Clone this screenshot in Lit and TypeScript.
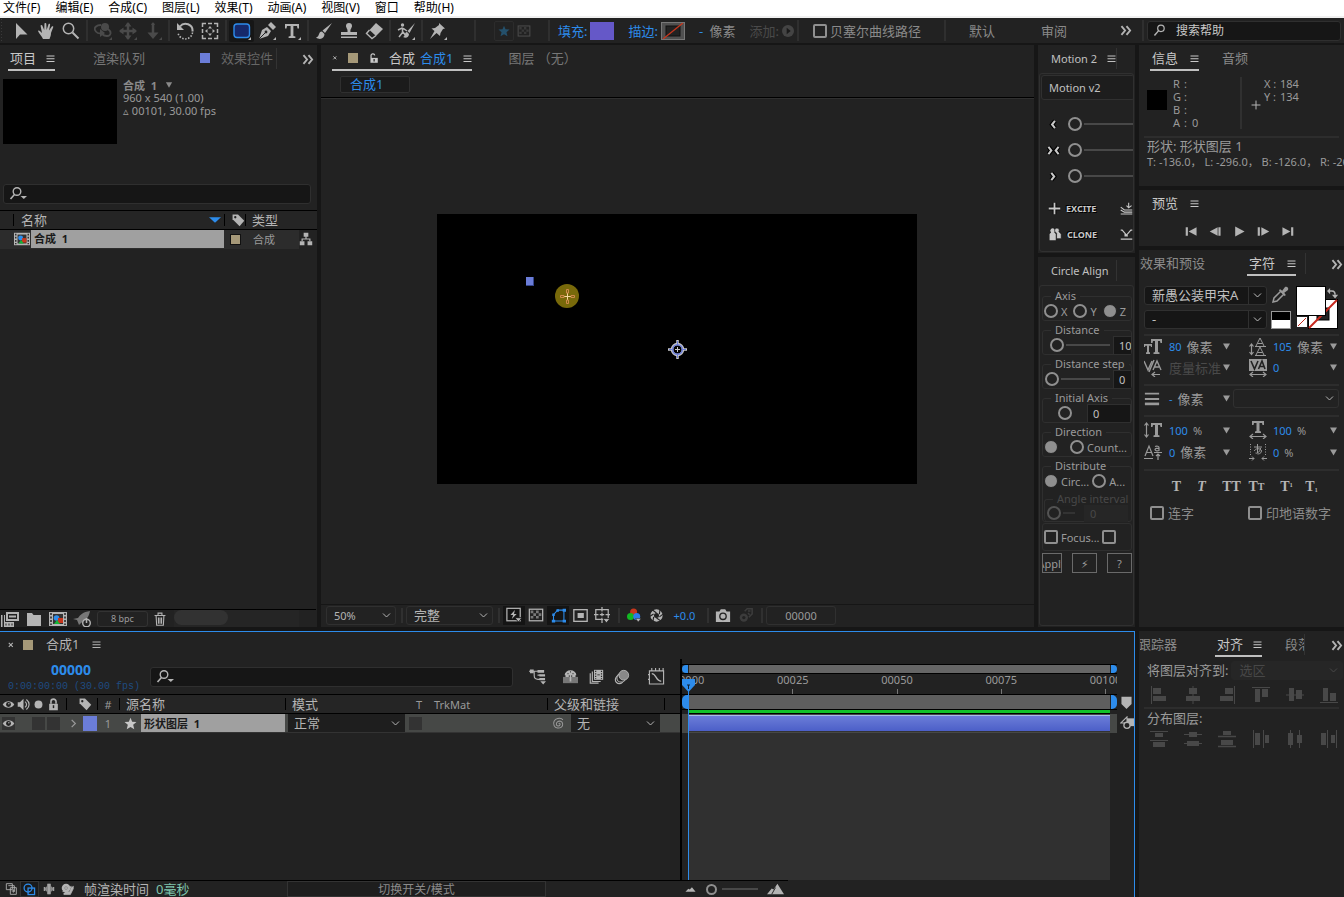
import { LitElement, html, svg, css, nothing, TemplateResult, SVGTemplateResult } from "lit";
import { customElement } from "lit/decorators.js";

type Glyph = SVGTemplateResult;

/* Every glyph is drawn on an 18 x 18 grid with currentColor. */
const corner = svg`<path d="M18 15v3h-3z" fill="currentColor"/>`;
const icons: Record<string, Glyph> = {
  select: svg`<path d="M4 1v16l4-4.500h7.500z" fill="currentColor"/>`,
  hand: svg`<path d="M6 17c-1-3-4-5-5-8 1-1 2 0 4 2L3.500 3.500c1-1 1.800-.5 2 .5L7.200 8 7.500 1.500c.8-.9 1.700-.5 1.800.3L9.600 8l2-6c1-.6 1.700 0 1.500.9L12 8.600l3-4.300c1-.4 1.500.2 1.200 1L14 11c0 3-1 4-1.500 6z" fill="currentColor"/>`,
  zoom: svg`<circle cx="6.500" cy="6.500" r="5.200" fill="none" stroke="currentColor" stroke-width="1.500"/><path d="M10.500 10.500l6 6" stroke="currentColor" stroke-width="2"/>`,
  orbit: svg`<circle cx="11" cy="5" r="4" fill="currentColor"/><path d="M7 3C2 3 0 6 1 8c1 3 4 4 7 3M14 7c4 3 3 7-1 7-2 0-4-1-5-2" fill="none" stroke="currentColor" stroke-width="1.800"/><path d="M6 7v8l5-4z" fill="currentColor"/>${corner}`,
  pan: svg`<path d="M9 1v16M1 9h16" stroke="currentColor" stroke-width="2.400"/><path d="M9 0l3.500 4.500h-7zM9 18l3.500-4.500h-7zM0 9l4.500-3.500v7zM18 9l-4.500-3.500v7z" fill="currentColor"/>${corner}`,
  dolly: svg`<path d="M9 1v12" stroke="currentColor" stroke-width="2.500"/><path d="M7 3l2-3 2 3zM3.500 10.500h11L9 17z" fill="currentColor"/>${corner}`,
  rotate: svg`<path d="M4 4.500a7 7 0 0 1 12.500 5" fill="none" stroke="currentColor" stroke-width="2"/><path d="M16.500 10.500a7.300 7.300 0 0 1-14.500 0" fill="none" stroke="currentColor" stroke-width="1.600" stroke-dasharray="1.500 1.500"/><path d="M1 1v7h7z" fill="currentColor"/>`,
  anchor: svg`<path d="M1.500 5V1.500H5M7 1.500h4M13 1.500h3.500V5M16.500 7v4M16.500 13v3.500H13M11 16.500H7M5 16.500H1.500V13M1.500 11V7" fill="none" stroke="currentColor" stroke-width="1.500"/><path d="M9 4l2 2.500H7zM9 14l2-2.500H7zM4 9l2.500-2v4zM14 9l-2.500-2v4z" fill="currentColor"/>`,
  roundrect: svg`<rect x="1" y="2" width="15.500" height="13.500" rx="3" fill="#16296b" stroke="#2d8ceb" stroke-width="1.400"/>${corner}`,
  pen: svg`<path d="M1 17l3-9 5-3 4 4-3 5z" fill="currentColor"/><path d="M10 3l3-3 5 5-3 3z" fill="currentColor"/><path d="M1 17l6-6" stroke="#222"/><circle cx="8" cy="10" r="1.400" fill="#222"/>${corner}`,
  type: svg`<path d="M2 2h14v4.500h-1.500L14 4h-3.600v10l2 .6V16H5.600v-1.400l2-.6V4H4l-.5 2.500H2z" fill="currentColor"/>${corner}`,
  brush: svg`<path d="M17 1L7.500 8.500l2.500 2.500zM7 9.500c-4 0-2 5-6 6 4 3 8.500 1 8.500-3.500z" fill="currentColor"/>`,
  stamp: svg`<path d="M7.500 10C8 7 6 6 6 4a3 3 0 0 1 6 0c0 2-2 3-1.500 6H17v3H1v-3zM1 14.500h16V16H1z" fill="currentColor"/>`,
  eraser: svg`<path d="M11 1l7 6-7 7-6.500-6z" fill="currentColor"/><path d="M4.500 8L1.500 11.500 7 16.500l4-3" fill="none" stroke="currentColor" stroke-width="1.400"/>`,
  roto: svg`<circle cx="5.500" cy="3" r="1.700" fill="currentColor"/><path d="M1 8l4-2 2 1 3 2M5.500 6v4.500L2 15M6 10l3 4" fill="none" stroke="currentColor" stroke-width="1.500"/><path d="M18 1l-7.500 8 2 2zM10 10c-3 0-1 4-4 5 3 2 6 0 6-3z" fill="currentColor"/>${corner}`,
  pin: svg`<path d="M10 1l6 5.500-2 .5-2.500 4-.5 3-3.500-3L1 17l4.500-8L2.500 6.500 6 6l4-3z" fill="currentColor"/>${corner}`,
  star: svg`<path d="M9 1l2.300 5.500 6 .4-4.600 3.900L14.200 17 9 13.700 3.800 17l1.500-6.200L.7 6.900l6-.4z" fill="currentColor"/>`,
  menu: svg`<path d="M1 4h16M1 9.500h16M1 15h16" stroke="currentColor" stroke-width="2"/>`,
  more: svg`<path d="M2 3l5 6-5 6M9 3l5 6-5 6" fill="none" stroke="currentColor" stroke-width="2.600"/>`,
  close: svg`<path d="M4 4l9 9M13 4l-9 9" stroke="currentColor" stroke-width="2.500"/>`,
  unlock: svg`<rect x="4" y="8" width="12" height="8" fill="currentColor"/><path d="M5 8V5a3 3 0 0 1 6-1" fill="none" stroke="currentColor" stroke-width="2"/><path d="M10 10v4" stroke="#222" stroke-width="2"/>`,
  lock: svg`<rect x="3" y="8" width="12" height="9" fill="currentColor"/><path d="M5.500 8V5a3.500 3.500 0 0 1 7 0v3" fill="none" stroke="currentColor" stroke-width="2.200"/><path d="M9 10v4" stroke="#222" stroke-width="2"/>`,
  lens: svg`<circle cx="11" cy="6" r="4.500" fill="none" stroke="currentColor" stroke-width="1.700"/><path d="M7.500 9.500L2 16" stroke="currentColor" stroke-width="2"/>`,
  lensDrop: svg`<circle cx="8" cy="6.500" r="3.800" fill="none" stroke="currentColor" stroke-width="1.400"/><path d="M5.500 9.500L1.500 14" stroke="currentColor" stroke-width="1.600"/><path d="M11.500 11h6.500l-3.200 3z" fill="currentColor"/>`,
  down: svg`<path d="M2 3h14L9 15z" fill="currentColor"/>`,
  sort: svg`<path d="M0 5h18L9 13z" fill="#2d8ceb"/>`,
  chevron: svg`<path d="M2 5l7 7 7-7" fill="none" stroke="currentColor" stroke-width="2"/>`,
  twirl: svg`<path d="M6 3l6 6-6 6" fill="none" stroke="currentColor" stroke-width="2"/>`,
  tag: svg`<path d="M2 2h7l8 8-6 7-9-9z" fill="currentColor"/><circle cx="5.500" cy="5.500" r="1.500" fill="#222"/>`,
  comp: svg`<rect x="0" y="2" width="18" height="14" fill="#b4b4b4"/><path d="M2 3v12M16 3v12" stroke="#222" stroke-width="1.500" stroke-dasharray="2 1.500"/><rect x="4" y="4" width="10" height="10" fill="#333"/><circle cx="7.500" cy="8" r="2.800" fill="#2d8ceb"/><rect x="9" y="8" width="5" height="5" fill="#c8371d"/><path d="M5 14l3-4 3 4z" fill="#17b536"/>`,
  tree: svg`<path d="M6 1h6v5H6zM1 12h6v5H1zM11 12h6v5h-6z" fill="currentColor"/><path d="M9 5v4M4 12V9h10v3" fill="none" stroke="currentColor" stroke-width="1.500"/>`,
  footage: svg`<path d="M6 3h11v7H6z" fill="none" stroke="currentColor" stroke-width="2"/><path d="M8 5.500h7v2H8zM0 5h1.500v12H0zM3 12h10v5H3zM3 5h1v12H3z" fill="currentColor"/><path d="M5 13.500v2M8 13.500v2M11 13.500v2" stroke="#222"/>`,
  folder: svg`<path d="M2 3h5l1.500 2H16v11H2z" fill="currentColor"/>`,
  rocket: svg`<path d="M17 1C10 2 7 5 5 8L0 9l4 1 2 5 2-2c5-3 8-6 9-12z" fill="#777"/><circle cx="13.500" cy="13" r="3.800" fill="#222" stroke="currentColor" stroke-width="1.400"/><path d="M13.500 8v5" stroke="currentColor" stroke-width="1.500"/>`,
  trash: svg`<path d="M2 4.500h14M6.500 4V1.500h5V4M4 5l.7 12h8.600L14 5M7 7v8M9 7v8M11 7v8" fill="none" stroke="currentColor" stroke-width="1.400"/>`,
  fast: svg`<rect x="1" y="1.500" width="15" height="14" fill="none" stroke="currentColor" stroke-width="1.400"/><path d="M10 3.500L5 9h3l-1.500 4.500L12 8H9z" fill="currentColor"/><path d="M10 12h8l-4 5z" fill="currentColor" stroke="#161616"/>`,
  checker: svg`<rect x="1.500" y="2.500" width="15" height="13" fill="none" stroke="currentColor" stroke-width="1.400"/><path d="M3 4h3v3H3zM9 4h3v3H9zM6 7h3v3H6zM12 7h3v3h-3zM3 10h3v3H3zM9 10h3v3H9z" fill="currentColor" opacity=".6"/>`,
  mask: svg`<path d="M3 15.500V8l5-5.500h7.500v13z" fill="none" stroke="#2d8ceb" stroke-width="1.300"/><path d="M1 14h4v3.500H1zM14 14h4v3.500h-4zM14 1h4v3.500h-4zM6.500 1.500h3v3h-3zM1.500 6.500h3v3h-3z" fill="#2d8ceb"/>`,
  region: svg`<rect x="1" y="2" width="16" height="14" fill="none" stroke="currentColor" stroke-width="1.600"/><rect x="5.500" y="6" width="7.500" height="6" fill="currentColor"/>`,
  guides: svg`<path d="M2 3h14v11H2zM9 0v5M9 6.500v4M9 12v6M0 8.500h5M6.500 8.500h5M13 8.500h5" fill="none" stroke="currentColor" stroke-width="1.400"/><path d="M10 13h8l-4 5z" fill="currentColor" stroke="#222"/>`,
  rgb: svg`<circle cx="8.500" cy="5" r="4.500" fill="#c8371d"/><circle cx="4.500" cy="11" r="4.500" fill="#12b822"/><circle cx="12.500" cy="11" r="4.500" fill="#2d7ceb"/><path d="M11 13.500h7L14.500 18z" fill="currentColor" stroke="#222" stroke-width=".6"/>`,
  aperture: svg`<circle cx="9" cy="9" r="6" fill="none" stroke="currentColor" stroke-width="5"/><path d="M9 5.500L3 1M13 7l1-7M13 11l5-4M9 12.500l6 4M5 11l-1 7M5 7L0 10" stroke="#222" stroke-width="1.500"/>`,
  camera: svg`<path d="M1 5h4l1.500-2.500h5L13 5h4v12H1z" fill="currentColor"/><circle cx="9" cy="10.500" r="3.600" fill="none" stroke="#222" stroke-width="1.500"/>`,
  showsnap: svg`<circle cx="7" cy="11.500" r="5" fill="currentColor"/><circle cx="7" cy="11.500" r="2" fill="#222"/><path d="M8 4l3-3h6v6l-4 4M12 3.500h3M12 6l2 2" fill="none" stroke="currentColor" stroke-width="1.800"/>`,
  plus: svg`<path d="M9 1v16M1 9h16" stroke="#000" stroke-width="5"/><path d="M9 1v16M1 9h16" stroke="currentColor" stroke-width="2.500"/>`,
  cross: svg`<path d="M9 1v16M1 9h16" stroke="currentColor" stroke-width="1.800"/>`,
  clone: svg`<path d="M2 17V9l2-2a3 3 0 1 1 4 0l2 2v8z" fill="currentColor"/><path d="M11 15V8L9 6a3 3 0 1 1 5 0l3 3v6z" fill="currentColor" stroke="#111" stroke-width=".8"/>`,
  easeL: svg`<path d="M11 4L7 9l4 5" fill="none" stroke="#000" stroke-width="6"/><path d="M11 4L7 9l4 5" fill="none" stroke="currentColor" stroke-width="2.800"/>`,
  easeR: svg`<path d="M6 4l4 5-4 5" fill="none" stroke="#000" stroke-width="6"/><path d="M6 4l4 5-4 5" fill="none" stroke="currentColor" stroke-width="2.800"/>`,
  easeB: svg`<path d="M2 4l4 5-4 5M16 4l-4 5 4 5" fill="none" stroke="#000" stroke-width="6"/><path d="M2 4l4 5-4 5M16 4l-4 5 4 5" fill="none" stroke="currentColor" stroke-width="2.800"/>`,
  land: svg`<path d="M12 1v6M9 5l3 3 4-3M1 7l5 4h11M1 11l5 3h11M1 16.500h16" fill="none" stroke="currentColor" stroke-width="1.500"/>`,
  drop: svg`<path d="M1 3h2l6 7 6-7h2M7 7v4h4M1 15.500h16" fill="none" stroke="currentColor" stroke-width="1.600"/>`,
  first: svg`<path d="M1 3h3v12H1zM16 3v12L5 9z" fill="currentColor"/>`,
  prev: svg`<path d="M13 3h3v12h-3zM12 3v12L1 9z" fill="currentColor"/>`,
  play: svg`<path d="M3 2l13 7-13 7z" fill="currentColor"/>`,
  next: svg`<path d="M1 3h3v12H1zM6 3v12l11-6z" fill="currentColor"/>`,
  last: svg`<path d="M14 3h3v12h-3zM2 3v12l11-6z" fill="currentColor"/>`,
  dropper: svg`<path d="M2 16l1-4 7-7 3 3-7 7z" fill="none" stroke="currentColor" stroke-width="1.500"/><path d="M9 3l6 6-1.500 1L8 4.500zM11 5l3-4c2-1 4 1 3 3l-4 3z" fill="currentColor"/>`,
  swap: svg`<path d="M4 5h4c4 0 5 3 5 6" fill="none" stroke="currentColor" stroke-width="2.400"/><path d="M5 0v10L0 5zM8 11h10l-5 6z" fill="currentColor"/>`,
  size: svg`<path d="M7 1h11v4h-1.500L16 3h-2v11l1.500.5V16h-6v-1.500L11 14V3H9L8.500 5H7zM0 6h8v3H7l-.4-1.300H5V14l1 .5V16H2v-1.500l1-.5V7.700H1.300L1 9H0z" fill="currentColor"/>`,
  leading: svg`<path d="M7 8l4-8 4 8M8.500 5.500h5M7 17l4-8 4 8M8.500 14.500h5M6 17.500h11M6 8.500h11" fill="none" stroke="currentColor"/><path d="M2.500 6v10M.5 8.500L2.500 6l2 2.500M.5 14l2 2.500 2-2.500" fill="none" stroke="currentColor" stroke-width="1.200"/>`,
  kern: svg`<path d="M0 2l4 9 4-9M17 11L13 2 9 11M10 8h5M10 1L5 13" fill="none" stroke="currentColor" stroke-width="1.400"/><path d="M8 15.500h8M11 13l-3 2.500 3 2.500" fill="none" stroke="currentColor" stroke-width="1.200"/>`,
  track: svg`<rect x="0" y="0" width="18" height="12" fill="currentColor"/><path d="M2 2l3.500 8L9 2M16 10l-3-8-3.500 8M11 7.500h4" fill="none" stroke="#222" stroke-width="1.600"/><path d="M1 15.500h16M4 13l-3 2.500L4 18M14 13l3 2.500-3 2.500" fill="none" stroke="currentColor" stroke-width="1.200"/>`,
  stroke: svg`<path d="M1 3h16M1 9h16" stroke="currentColor" stroke-width="2"/><path d="M1 14.500h16" stroke="currentColor" stroke-width="3"/>`,
  vscale: svg`<path d="M7 2h11v4h-1.500L16 4h-2v10l1.500.5V16h-6v-1.500L11 14V4H9l-.5 2H7z" fill="currentColor"/><path d="M2.500 2v14M.5 4.500L2.500 2l2 2.500M.5 13.500l2 2.500 2-2.500" fill="none" stroke="currentColor" stroke-width="1.200"/>`,
  hscale: svg`<path d="M3 0h12v4h-1.500L13 2h-2.500v8l1.500.5V12H6v-1.500L7.500 10V2H5l-.5 2H3z" fill="currentColor"/><path d="M1 15.500h16M4 13l-3 2.500L4 18M14 13l3 2.500-3 2.500" fill="none" stroke="currentColor" stroke-width="1.200"/>`,
  baseline: svg`<path d="M1 13L5 3l4 10M2.500 9.500h5M0 15.500h9M10 9.500h8M11 3.500c2-1 4 0 4 1v3c-2 1-4 0-4-1s2-1.500 4-1M14 17v-6M12 13l2-2 2 2" fill="none" stroke="currentColor" stroke-width="1.200"/>`,
  tsume: svg`<path d="M5 4h8M8.500 1v9M5.500 8c0-3 7-3 7 0s-4 3-4 3M11.500 5c0 3-3 6-5 5" fill="none" stroke="currentColor"/><path d="M1.500 1v11M16.500 1v11" stroke="currentColor" stroke-dasharray="1 1.500"/><path d="M0 15.500h5M3 13.500l2 2-2 2M18 15.500h-5M15 13.500l-2 2 2 2" fill="none" stroke="currentColor"/>`,
  flow: svg`<path d="M0 3.500h10M5.500 4v4c0 3 2 4 4 4h3M9 7.500h3" fill="none" stroke="currentColor" stroke-width="1.200"/><path d="M1 1.500h4v4H1zM9 2h7v3H9zM11 6.500h6v2.500h-6zM11 10.500h6V13h-6zM12 14h6l-3 3.500z" fill="currentColor"/>`,
  shy: svg`<path d="M0 9.500h18V17H0z" fill="#777"/><path d="M2 7.500a7 6 0 0 1 14 0zM8 7h2v8H8zM3 7h4v2.500H3zM11 7h4v2.500h-4z" fill="currentColor"/><path d="M5.500 5.500h1M8.500 3.500h1M11.500 5.500h1" stroke="#222" stroke-width="1.500"/>`,
  blend: svg`<path d="M1.500 5v12h10M4 3v12h10" fill="none" stroke="currentColor" stroke-width="1.400"/><path d="M6 1h11v12H6z" fill="currentColor"/><path d="M8 2v10M15 2v10" stroke="#222" stroke-width="1.400" stroke-dasharray="1.500 1.500"/><path d="M10 7h3" stroke="#222"/>`,
  blur: svg`<circle cx="6" cy="12" r="4.500" fill="none" stroke="currentColor" stroke-width="1.300"/><circle cx="8" cy="10" r="4.800" fill="#222" stroke="currentColor" stroke-width="1.300"/><circle cx="11" cy="7" r="5.500" fill="#888" stroke="currentColor"/>`,
  graph: svg`<path d="M1.500 3h15v14h-15zM4 0v3M8 0v3M12 0v3M16 0v3M0 7h2M0 12h2" fill="none" stroke="currentColor" stroke-width="1.200"/><path d="M4 6c5 0 4 8 10 8" fill="none" stroke="currentColor" stroke-width="1.400"/>`,
  eye: svg`<path d="M1 9c4-6 12-6 16 0-4 6-12 6-16 0z" fill="currentColor"/><circle cx="9" cy="9" r="3.400" fill="#222"/><circle cx="9.500" cy="8" r="1" fill="currentColor"/>`,
  speaker: svg`<path d="M1 6h3l5-5v16l-5-5H1z" fill="currentColor"/><path d="M11 5c3 2 3 6 0 8M13 2c5 4 5 10 0 14" fill="none" stroke="currentColor" stroke-width="1.600"/>`,
  dot: svg`<circle cx="9" cy="9" r="5.500" fill="currentColor"/>`,
  spiral: svg`<path d="M9 9c1-1 3 0 2 2s-5 2-5-1 3-5 6-4 4 6 1 8-8 2-10-2 0-9 5-10 7 2 7 2" fill="none" stroke="currentColor" stroke-width="1.400"/>`,
  marker: svg`<path d="M2 1h14v10l-7 7-7-7z" fill="currentColor"/>`,
  shapes: svg`<rect x="9" y="3" width="9" height="10" fill="currentColor"/><path d="M9 1L1 9h8z" fill="#222" stroke="currentColor" stroke-width="1.400"/><circle cx="9" cy="12" r="4" fill="#222" stroke="currentColor" stroke-width="1.700"/>`,
  expand: svg`<path d="M2 1h9v9H2zM5 4h9v9M8 7h9v10H8zM10 12h5M12.500 9.500v5" fill="none" stroke="currentColor" stroke-width="1.300"/>`,
  modes: svg`<circle cx="7" cy="7" r="5.500" fill="none" stroke="#2d8ceb" stroke-width="1.800"/><rect x="7" y="7" width="9" height="9" fill="none" stroke="#2d8ceb" stroke-width="1.800"/>`,
  brackets: svg`<path d="M6 1h6v4l3 2v4l-3 2v4H6v-4l-3-2V7l3-2z" fill="#888"/><path d="M9 1v16" stroke="#bbb" stroke-width="1.600"/><path d="M2 6v6M16 6v6" stroke="currentColor" stroke-width="1.600"/>`,
  snail: svg`<circle cx="7" cy="7" r="6" fill="currentColor"/><path d="M2 12h10l2-6V4M17 4v4l-4 8H4v-2" fill="currentColor" stroke="currentColor"/><circle cx="7" cy="7" r="2" fill="none" stroke="#888"/>`,
  hill: svg`<path d="M2 12l4-4 2 1 3-3 5 6z" fill="currentColor"/>`,
  hills: svg`<path d="M0 14l5-6 2 1 4-6 7 11z" fill="currentColor"/><path d="M5 14l4-7" stroke="#222"/>`,
};

/* Alignment glyphs: rule lines and blocks on the same grid. */
const alignGlyphs: Glyph[][] = [
  [
    svg`<path d="M1.500 0v18" stroke="currentColor"/><path d="M3 2h8v6H3zM3 10h13v5H3z" fill="currentColor"/>`,
    svg`<path d="M9 0v18" stroke="currentColor"/><path d="M5 2h8v6H5zM2 10h14v5H2z" fill="currentColor"/>`,
    svg`<path d="M16.500 0v18" stroke="currentColor"/><path d="M7 2h8v6H7zM2 10h13v5H2z" fill="currentColor"/>`,
    svg`<path d="M0 1.500h18" stroke="currentColor"/><path d="M3 3h5v13H3zM10 3h6v8h-6z" fill="currentColor"/>`,
    svg`<path d="M0 9h18" stroke="currentColor"/><path d="M3 2h5v13H3zM10 4h6v9h-6z" fill="currentColor"/>`,
    svg`<path d="M0 16.500h18" stroke="currentColor"/><path d="M3 2h5v13H3zM10 7h6v8h-6z" fill="currentColor"/>`,
  ],
  [
    svg`<path d="M0 1.500h18M0 10.500h18" stroke="currentColor"/><path d="M5 3h8v4H5zM3 12h12v5H3z" fill="currentColor"/>`,
    svg`<path d="M0 4.500h18M0 13.500h18" stroke="currentColor"/><path d="M5 2h8v5H5zM3 11h12v5H3z" fill="currentColor"/>`,
    svg`<path d="M0 6.500h18M0 16.500h18" stroke="currentColor" stroke-width="1.500"/><path d="M5 1h8v4H5zM3 10h12v5H3z" fill="currentColor"/>`,
    svg`<path d="M1.500 0v18M11.500 0v18" stroke="currentColor"/><path d="M3 3h5v12H3zM13 5h4v8h-4z" fill="currentColor"/>`,
    svg`<path d="M4.500 0v18M13.500 0v18" stroke="currentColor"/><path d="M2 3h5v12H2zM11 5h5v8h-5z" fill="currentColor"/>`,
    svg`<path d="M7.500 0v18M16.500 0v18" stroke="currentColor"/><path d="M1 3h5v12H1zM11 5h4v8h-4z" fill="currentColor"/>`,
  ],
];

const glyph = (g: Glyph, size: number) =>
  html`<svg class="ic" width=${size} height=${size} viewBox="0 0 18 18" aria-hidden="true">${g}</svg>`;
const icon = (name: string, size = 16) => glyph(icons[name], size);

const dropdown = (label: string, value: string, cls: string, disabled = false) => html`
  <span class="dd ${cls}">
    <select aria-label=${label} ?disabled=${disabled}><option>${value}</option></select>
    ${icon("chevron", 9)}
  </span>`;

@customElement("app-root")
export class AppRoot extends LitElement {
  static styles = css`
    :host {
      display: flex;
      flex-direction: column;
      height: 100vh;
      overflow: hidden;
      background: #161616;
      color: #9a9a9a;
      font: 11px/13px "Noto Sans", "Noto Sans CJK SC", sans-serif;
    }
    * { box-sizing: border-box; }
    button, select, input {
      font: inherit; color: inherit; background: none; border: 0; padding: 0; margin: 0; border-radius: 0;
    }
    button { white-space: nowrap; display: flex; align-items: center; justify-content: center; }
    fieldset, p, h2 { margin: 0; }
    .ic { display: block; flex: none; }
    .cjk { font-size: 13px; line-height: 16px; white-space: nowrap; }
    .bright { color: #c8c8c8; }
    .blue { color: #2d8ceb; }
    .dim { color: #4a4a4a; }
    .row { display: flex; align-items: center; }
    .panel { background: #222; min-width: 0; min-height: 0; overflow: hidden; display: flex; flex-direction: column; }

    .menubar { flex: none; height: 18px; background: #fff; border-bottom: 2px solid #f0f0f0; display: flex; gap: 15px; padding-left: 3px; color: #000; font-size: 12px; line-height: 15px; }
    .menubar a { color: inherit; text-decoration: none; white-space: nowrap; }

    .toolbar { flex: none; height: 25px; background: #222; display: flex; align-items: center; color: #b4b4b4; padding-left: 8px; background-image: radial-gradient(#3a3a3a 1px, transparent 1px); background-size: 3px 3px; background-repeat: repeat-y; }
    .tool { width: 25px; height: 22px; }
    .tool.on { background: #161616; border-radius: 2px; }
    .tool:disabled { color: #4a4a4a; }
    .sep { flex: none; width: 2px; height: 21px; margin: 0 2px 0 3px; background: #2f2f2f; }
    .options { display: flex; align-items: center; margin-left: 24px; gap: 8px; }
    .options .sep { margin: 0; }
    .pair { display: flex; align-items: center; gap: 3px; }
    .pair.spaced { margin-left: 6px; }
    .pair.style { margin: 0 9px 0 10px; }
    .mini { width: 20px; height: 20px; border: 1px solid #2c2c2c; border-radius: 2px; color: #24506b; }
    .swatch-fill { width: 24px; height: 18px; background: #6558c8; }
    .swatch-stroke { width: 24px; height: 18px; border: 1px solid #777; background: #505050; }
    .toolbar .text { color: #8a8a8a; }
    .spaces { margin-left: auto; display: flex; align-items: center; }
    .spaces .sep { margin: 0; }
    .spaces .start { margin-right: 23px; }
    .spaces .cjk { width: 72px; text-align: left; justify-content: flex-start; color: #8a8a8a; }
    .spaces .more { width: 24px; margin: 0 4px 0 1px; }
    .field { display: flex; align-items: center; background: #161616; border: 1px solid #2f2f2f; border-radius: 3px; height: 20px; padding-left: 5px; color: #b4b4b4; }
    .field input { flex: 1; min-width: 0; outline: none; padding-left: 10px; font-size: 12px; }
    .field input::placeholder { color: #c8c8c8; opacity: 1; }
    .help { width: 194px; margin: 0 3px; }

    .work { flex: 1; min-height: 0; margin-top: 2px; display: grid; gap: 4px; grid-template-columns: 317px minmax(0, 1fr) 97px 205px; grid-template-rows: minmax(0, 1fr) 266px; }
    .stack { display: flex; flex-direction: column; gap: 4px; min-width: 0; min-height: 0; }
    .grow { flex: 1; }
    .fit { flex: none; }

    .tabs { flex: none; display: flex; height: 26px; color: #777; font-size: 13px; }
    .tab { display: flex; align-items: center; gap: 10px; padding-top: 2px; border-bottom: 2px solid transparent; white-space: nowrap; height: 26px; justify-content: flex-start; }
    .tab.on { color: #c8c8c8; border-color: #c0c0c0; padding-left: 2px; }
    .tab.plain { border-color: transparent; }
    .tabs .end { margin-left: auto; padding-top: 2px; color: #b4b4b4; }
    .bar { border-right: 1px solid #333; height: 21px; margin-top: 3px; }
    .sq { width: 10px; height: 10px; flex: none; }
    .tan { background: #a59878; }
    .peri { background: #6b7dd8; }
    .hr { flex: none; height: 2px; background: #2d2d2d; margin: 0 5px; }
    .hr.low { margin-top: 6px; margin-bottom: 2px; }

    .project .tabs { padding: 0 2px 0 8px; }
    .project .queue { margin-left: 38px; }
    .project .fx { margin-left: 55px; gap: 11px; color: #666; padding-right: 3px; }
    .summary { display: flex; gap: 6px; padding: 8px 3px 0; height: 113px; }
    .thumb { width: 114px; height: 65px; background: #000; }
    .summary .name { display: flex; align-items: center; gap: 8px; height: 12px; font-weight: bold; color: #8a8a8a; }
    .project .field { margin: 0 6px 6px 3px; flex: none; }
    table { border-collapse: collapse; table-layout: fixed; width: 100%; }
    th, td { padding: 0; text-align: left; font-weight: normal; white-space: nowrap; overflow: hidden; vertical-align: middle; }
    th { height: 19px; color: #b4b4b4; font-size: 13px; line-height: 17px; background: #252525 linear-gradient(#000, #000) 0 50% / 1px 12px no-repeat; padding-left: 7px; }
    thead tr { border-top: 1px solid #000; border-bottom: 1px solid #000; }
    .files .first { background-position: 13px 50%; padding-left: 21px; }
    .files .rest { background-image: none; }
    .files th .row { justify-content: space-between; padding-right: 3px; }
    .files tbody tr { height: 19px; background: #2c2c2c; }
    .files .item { gap: 1px; padding-left: 14px; }
    .picked { flex: 1; height: 18px; background: #a0a0a0; color: #1a1a1a; font-weight: bold; line-height: 18px; padding-left: 3px; font-size: 11px; }
    .files .sq { margin-left: 6px; border: 1px solid #111; width: 11px; height: 11px; }
    .files .kind { padding-left: 8px; }
    .files .used { background: #222; color: #b4b4b4; }
    .pfoot { flex: none; height: 18px; border-top: 1px solid #000; display: flex; align-items: center; color: #b4b4b4; padding-left: 1px; margin-right: 1px; }
    .pfoot button { width: 24px; height: 16px; justify-content: flex-start; }
    .pfoot .bpc { width: 51px; border: 1px solid #333; border-radius: 3px; font-size: 9px; color: #9a9a9a; justify-content: center; }
    .pfoot .trash { justify-content: center; }
    .pfoot .scroll { width: 125px; height: 17px; background: #252525; margin-left: 2px; }
    .pfoot .thumbbar { width: 54px; height: 15px; border-radius: 8px; background: #323232; }

    .comp .tabs { padding-left: 11px; }
    .comp .tab.on { padding-left: 0; }
    .comp .tab.on .blue { margin-left: -5px; }
    .comp .layer { margin-left: 36px; }
    .crumbs { height: 27px; flex: none; border-bottom: 1px solid #000; padding: 5px 0 0 19px; }
    .crumb { width: 70px; height: 17px; background: #1b1b1b; border: 1px solid #2f2f2f; border-radius: 2px; justify-content: flex-start; padding-left: 9px; font-size: 13px; }
    .viewer { flex: 1; border-top: 1px solid #303030; display: flex; align-items: center; justify-content: center; padding: 0 1px 5px 0; }
    .stage { position: relative; width: 480px; height: 270px; background: #000; }
    .handle { position: absolute; left: 89px; top: 63px; width: 8px; height: 9px; background: #6b7dd8; border: solid #34458c; border-width: 0 1px 1px 0; }
    .cursor { position: absolute; left: 118px; top: 70px; }
    .center { position: absolute; left: 231px; top: 126px; }
    .vfoot { flex: none; height: 23px; border-top: 1px solid #161616; display: flex; align-items: center; padding: 0 0 2px 5px; color: #b4b4b4; }
    .vfoot .sep { height: 15px; margin: 0 3px 0 5px; background: #303030; }
    .vfoot button { width: 22px; height: 19px; }
    .vfoot .group { display: flex; }
    .vfoot .group button:disabled { color: #3c3c3c; }
    .vfoot .on { background: #141414; }
    .vfoot .exposure { width: 35px; }
    .vfoot .frame { width: 70px; border: 1px solid #303030; border-radius: 3px; color: #9a9a9a; }
    .dd { display: grid; grid-template-columns: minmax(0, 1fr) 18px; align-items: center; border: 1px solid #303030; border-radius: 3px; height: 19px; color: #b4b4b4; }
    .dd select { appearance: none; grid-column: 1 / 3; grid-row: 1; width: 100%; height: 17px; padding-left: 7px; outline: none; opacity: 1; }
    .dd .ic { grid-column: 2; grid-row: 1; justify-self: center; pointer-events: none; }
    .dd.zoomdd { width: 70px; }
    .dd.resdd { width: 87px; font-size: 13px; }

    .motion .tabs, .circle .tabs { padding-left: 13px; }
    .motion .tab, .circle .tab { font-size: 11px; color: #c0c0c0; gap: 10px; }
    .circle .tab { padding-right: 7px; }
    .frame-box { border: 1px solid #303030; border-radius: 3px; margin: 2px 1px 1px; flex: 1; overflow: hidden; }
    .script { margin: 1px -2px 11px 1px; height: 25px; border: 1px solid #303030; border-radius: 3px; background: #1d1d1d; padding-left: 7px; line-height: 23px; color: #c0c0c0; font-size: 11px; }
    .ease { display: flex; align-items: center; height: 26px; padding-left: 7px; color: #c8c8c8; }
    .slider { flex: 1; min-width: 0; appearance: none; height: 14px; outline: none; background: linear-gradient(#484848, #484848) 100% 50% / calc(100% - 16px) 2px no-repeat; }
    .slider::-webkit-slider-thumb { appearance: none; width: 14px; height: 14px; border: 2px solid #8f8f8f; border-radius: 50%; background: #222; }
    .ease .slider { margin-left: 8px; }
    .action { display: flex; height: 26px; align-items: center; color: #c8c8c8; padding-left: 8px; justify-content: space-between; }
    .action button { gap: 5px; font-size: 9px; font-weight: bold; text-shadow: 1px 1px #000, -1px -1px #000; }
    .actions { padding: 6px 0 4px; }

    .circle .frame-box { padding: 4px 1px 0 2px; display: flex; flex-direction: column; }
    .circle .frame-box > fieldset { margin-bottom: 3px; flex: none; }
    fieldset { min-width: 0; border: 1px solid #2f2f2f; border-radius: 3px; padding: 0; }
    fieldset fieldset { border-width: 1px 0 0 1px; margin: 3px 0 0 1px; color: #484848; }
    legend { margin-left: 8px; padding: 0 4px; line-height: 12px; white-space: nowrap; }
    .opts { display: flex; align-items: center; height: 18px; gap: 3px; padding-left: 1px; white-space: nowrap; }
    fieldset fieldset .opts { height: 16px; }
    .opts.even { gap: 6px; }
    .opts label { display: flex; align-items: center; gap: 3px; }
    .opts .slider { margin-left: 6px; }
    .opts .near { margin-left: 1px; }
    .opts .bare { background: none; }
    .opts .apart { margin-left: 9px; }
    .opts .num { width: 18px; height: 19px; background: #161616; border: 1px solid #2f2f2f; border-right: 0; padding-left: 5px; color: #c0c0c0; flex: none; }
    .opts .num.wide { width: 44px; border-right: 1px solid #2f2f2f; }
    .opts .num:disabled { height: 17px; color: #484848; background: #262626; border-color: #262626; }
    .opts .slider:disabled { opacity: .45; }
    .opts .short { width: 28px; flex: none; margin-left: 1px; margin-right: 6px; }
    input[type="radio"] { appearance: none; flex: none; width: 14px; height: 14px; border: 2px solid #8f8f8f; border-radius: 50%; }
    input[type="radio"]:checked { border: 1px solid #222; background: #8f8f8f; }
    input[type="checkbox"] { appearance: none; flex: none; width: 14px; height: 14px; border: 2px solid #8f8f8f; border-radius: 2px; }
    .focus { display: flex; align-items: center; gap: 2px; height: 28px; flex: none; border: 1px solid #2f2f2f; border-radius: 3px; padding-left: 1px; margin-top: -2px; }
    .focus label { display: flex; align-items: center; gap: 3px; }
    .cbtns { display: flex; gap: 10px; padding-top: 2px; }
    .cbtns button { flex: none; width: 25px; height: 20px; border: 1px solid #6a6a6a; }
    .cbtns .apply { width: 20px; overflow: hidden; }

    .side .tabs { padding-left: 11px; }
    .side .tab.on { padding-left: 2px; gap: 12px; }
    .info { height: 141px; flex: none; }
    .info .audio { margin-left: 23px; color: #8a8a8a; }
    .readout { display: grid; grid-template-columns: 26px 69px 22px 1fr; padding: 6px 8px 7px; }
    .chip { width: 20px; height: 20px; background: #000; margin-top: 13px; }
    .chan { display: grid; grid-template-columns: 11px 8px 1fr; border-right: 2px solid #303030; }
    .readout .plus { padding: 23px 0 0 9px; color: #b4b4b4; }
    .xy { display: grid; grid-template-columns: 16px 1fr; grid-auto-rows: 13px; }
    .note { padding: 1px 0 0 8px; white-space: nowrap; }
    .note p { line-height: 15px; }
    .preview { height: 56px; flex: none; }
    .transport { display: flex; justify-content: center; gap: 11px; padding: 9px 4px 0 0; color: #b4b4b4; }

    .char .tabs, .align .tabs { padding: 0 0 0 1px; }
    .char .other { color: #8a8a8a; width: 107px; }
    .char .bar { margin-left: 9px; }
    .fonts { display: grid; grid-template-columns: 123px 1fr; gap: 4px; padding: 10px 5px 4px; }
    .fontdds { display: grid; gap: 5px; align-content: start; }
    .dd.fontdd { background: #161616 linear-gradient(#303030, #303030) calc(100% - 17px) 0 / 1px 100% no-repeat; font-size: 13px; color: #c0c0c0; }
    .paint { display: grid; grid-template-columns: 21px 1fr; }
    .paint .bw { width: 20px; height: 18px; border: 1px solid #999; background: linear-gradient(#000 50%, #fff 50%); margin-top: 7px; }
    .wells { height: 44px; margin-left: 4px; }
    .crow { display: grid; grid-template-columns: 25px 53px 27px 24px minmax(0, 1fr) 10px; align-items: center; padding: 0 5px; height: 21px; color: #9a9a9a; }
    .crow.tall { height: 22px; }
    .crow button { display: flex; justify-content: flex-start; gap: 5px; align-items: center; }
    .crow .span { grid-column: 4 / 7; margin-left: -16px; }
    .styles { display: grid; grid-template-columns: 25px 30px 25px 30px 25px 25px; padding-left: 25px; height: 28px; align-items: center; color: #b4b4b4; font: bold 14px/16px "Liberation Serif", serif; }
    .styles button { width: 25px; }
    .styles small { font-size: 10px; }
    .checks { display: grid; grid-template-columns: 98px 1fr; padding-left: 11px; height: 24px; align-items: center; color: #8a8a8a; }
    .checks label { display: flex; align-items: center; gap: 4px; }

    .align .tab.on { margin-left: 38px; }
    .align .tracker { width: 37px; overflow: hidden; justify-content: flex-end; color: #8a8a8a; }
    .align .para { width: 19px; overflow: hidden; margin-left: 23px; color: #8a8a8a; }
    .alignto { display: flex; align-items: center; gap: 3px; padding: 0 1px 0 8px; height: 26px; }
    .dd.aligndd { flex: 1; background: #262626; border-color: #262626; color: #484848; font-size: 13px; }
    .aligns { display: flex; gap: 16px; padding-left: 11px; height: 24px; align-items: center; color: #484848; }
    .alabel { padding: 1px 8px; }

    .time { grid-column: 1 / 4; border: solid #2d8ceb; border-width: 1px 1px 0 0; }
    .ttab { flex: none; height: 27px; display: flex; align-items: center; padding: 0 0 2px 7px; font-size: 13px; color: #b4b4b4; gap: 13px; }
    .ttab .sq { margin-left: -5px; }
    .tbody { flex: 1; min-height: 0; display: grid; grid-template-columns: 682px minmax(0, 1fr) 17px; }
    .tleft { border-right: 2px solid #000; min-width: 0; }
    .thead { display: flex; align-items: center; height: 35px; color: #b4b4b4; }
    .tc { width: 150px; line-height: 14px; padding-top: 3px; }
    .tc p { padding: 0 0 3px 51px; font-weight: bold; font-size: 14px; color: #2d8ceb; }
    .tc .sub { padding: 0 0 0 8px; font: 10px/14px "Liberation Mono", monospace; color: #1f4b80; white-space: pre; }
    .thead .field { flex: 1; max-width: 363px; }
    .thead .tbtns { display: flex; padding-left: 12px; gap: 2px; }
    .thead .tbtns button { width: 24px; height: 20px; }
    .tbtns .wide { margin: 0 7px 0 0; }
    .tbtns .graph { margin-left: 8px; }
    .layers th.first { background-image: none; padding-left: 2px; }
    .layers th.bare { background-image: none; font-size: 11px; color: #9a9a9a; }
    .layers th.tagged { padding-left: 12px; }
    .layers .num { font-size: 11px; color: #9a9a9a; text-align: center; padding: 0; }
    .layers tbody tr { height: 19px; background: #464846; border-bottom: 1px solid #333; }
    .layers .sw { gap: 2px; }
    .layers td .sw { padding-left: 2px; }
    .layers .cell { width: 13px; height: 13px; background: #333; flex: none; color: #b4b4b4; }
    .layers .cell.gap { margin-left: 15px; }
    .layers .mark { gap: 4px; padding-left: 2px; color: #9a9a9a; }
    .layers .source { gap: 4px; padding-left: 5px; }
    .layers .picked { line-height: 19px; }
    .layers .label { width: 15px; height: 15px; }
    .dd.modedd { margin: 0 4px 0 3px; background: #1e1e1e; border-color: #1e1e1e; height: 18px; border-radius: 0; font-size: 13px; }
    .dd.modedd select { padding-left: 5px; }
    .parent { gap: 3px; padding-left: 5px; color: #9a9a9a; }
    .parent .dd { flex: 1; }

    .track { display: flex; flex-direction: column; position: relative; overflow: hidden; min-width: 0; margin-top: 5px; }
    .nav, .area { flex: none; display: flex; border: solid #000; border-width: 1px 0; }
    .nav { height: 10px; }
    .area { height: 16px; }
    .nav i { flex: 1; background: #666; }
    .area i { flex: 1; background: #5e5e5e; }
    .cap { width: 6px; background: #2d8ceb; border-radius: 5px 0 0 5px; margin-right: 1px; }
    .cap.r { border-radius: 0 5px 5px 0; margin: 0 0 0 1px; }
    .ruler { flex: none; height: 20px; line-height: 12px; display: flex; justify-content: space-between; margin: 0 11px 0 6px; }
    .ruler div { width: 1px; display: flex; flex-direction: column; align-items: center; justify-content: space-between; }
    .ruler div::after { content: ""; width: 1px; height: 5px; background: #777; }
    .cache { flex: none; height: 4px; background: #12c22a; margin: 0 7px 0 6px; border-bottom: 1px solid #000; }
    .lane { flex: none; height: 19px; padding: 1px 7px 1px 6px; background: #464846; }
    .clip { height: 17px; border-top: 1px solid #a8bcea; background: linear-gradient(#6b7dd8, #4c5fc8); border-bottom: 1px solid #333; }
    .empty { flex: 1; background: #303030; margin: 0 7px 0 6px; }
    .playhead { position: absolute; left: 0; top: 15px; bottom: 0; width: 13px; background: linear-gradient(#2d8ceb, #2d8ceb) 6px 0 / 1px 100% no-repeat; }
    .rail { display: flex; flex-direction: column; align-items: center; gap: 7px; padding: 37px 0 0 2px; color: #b4b4b4; }
    .tfoot { flex: none; height: 17px; border-top: 1px solid #000; display: flex; align-items: center; color: #b4b4b4; padding-left: 1px; max-width: 788px; }
    .tfoot button { width: 19px; height: 16px; }
    .tfoot .on { background: #1a1a1a; border: 1px solid #333; }
    .tfoot .cjk { margin-left: 7px; line-height: 15px; }
    .tfoot .teal { color: #7fc4ac; }
    .tfoot .toggle { width: 259px; margin-left: auto; border: 1px solid #333; background: #1e1e1e; color: #8a8a8a; font-size: 12px; }
    .tfoot .zoomer { display: flex; align-items: center; gap: 9px; margin: 0 4px 0 138px; width: 100px; }
    .tfoot .slider { height: 12px; }
    .tfoot .slider::-webkit-slider-thumb { width: 11px; height: 11px; }
  `;

  private tools(): TemplateResult {
    const groups = [
      ["select", "hand", "zoom"],
      ["orbit", "pan", "dolly"],
      ["rotate", "anchor"],
      ["roundrect", "pen", "type"],
      ["brush", "stamp", "eraser"],
      ["roto"],
      ["pin"],
    ];
    return html`${groups.map((g, i) => html`
      ${i ? html`<span class="sep"></span>` : nothing}
      ${g.map((t) => html`<button class="tool ${t === "roundrect" ? "on" : ""}" aria-label=${t} ?disabled=${i === 1}>${icon(t, 18)}</button>`)}`)}`;
  }

  private toolbar() {
    return html`<header class="toolbar">
      ${this.tools()}
      <div class="options">
        <span class="sep"></span>
        <span class="pair style"><button class="mini" aria-label="star">${icon("star", 12)}</button><span class="dim">${icon("checker", 14)}</span></span>
        <span class="sep"></span>
        <span class="pair"><span class="cjk blue">填充:</span><button class="swatch-fill" aria-label="fill"></button></span>
        <span class="pair spaced"><span class="cjk blue">描边:</span><button class="swatch-stroke" aria-label="stroke">
          <svg class="ic" width="22" height="16" viewBox="0 0 22 16"><rect x="4" y="3" width="14" height="10" fill="#222" stroke="#111"/><path d="M1 16L21 0" stroke="#c8371d" stroke-width="1.300"/></svg></button></span>
        <span class="pair spaced"><span class="cjk blue">-</span><span class="cjk text">&nbsp;像素</span></span>
        <span class="pair spaced dim"><span class="cjk">添加:</span>
          <svg class="ic" width="12" height="12" viewBox="0 0 18 18"><circle cx="9" cy="9" r="9" fill="#444"/><path d="M7 4l6 5-6 5z" fill="#1a1a1a"/></svg><span class="sep"></span></span>
        <label class="pair spaced cjk text"><input type="checkbox" />贝塞尔曲线路径</label>
      </div>
      <nav class="spaces">
        <span class="sep start"></span>
        <button class="cjk">默认</button><button class="cjk">审阅</button>
        <button class="more" aria-label="more">${icon("more", 13)}</button>
        <span class="sep"></span>
        <label class="field help">${icon("lens", 13)}<input placeholder="搜索帮助" aria-label="搜索帮助" /></label>
      </nav>
    </header>`;
  }

  private project() {
    return html`<section class="panel project">
      <div class="tabs">
        <button class="tab on">项目 ${icon("menu", 9)}</button>
        <button class="tab queue">渲染队列</button>
        <button class="tab fx"><span class="sq peri"></span>效果控件</button><span class="bar"></span>
        <button class="end" aria-label="more">${icon("more", 13)}</button>
      </div>
      <div class="summary">
        <div class="thumb"></div>
        <div><p class="name">合成&nbsp; 1 ${icon("down", 8)}</p><p>960 x 540 (1.00)</p><p>▵ 00101, 30.00 fps</p></div>
      </div>
      <label class="field">${icon("lensDrop", 18)}<input aria-label="search" /></label>
      <table class="files">
        <colgroup><col /><col style="width:21px" /><col style="width:54px" /><col style="width:18px" /></colgroup>
        <thead><tr><th class="first"><span class="row">名称 ${icon("sort", 12)}</span></th><th>${icon("tag", 14)}</th><th>类型</th><th class="rest"></th></tr></thead>
        <tbody><tr>
          <td><div class="row item">${icon("comp", 16)}<span class="picked">合成&nbsp; 1</span></div></td>
          <td><span class="row"><span class="sq tan"></span></span></td>
          <td class="kind">合成</td><td class="used">${icon("tree", 14)}</td>
        </tr></tbody>
      </table>
      <div class="grow"></div>
      <div class="pfoot">
        ${["footage", "folder", "comp", "rocket"].map((n) => html`<button aria-label=${n}>${icon(n, 18)}</button>`)}
        <button class="bpc">8 bpc</button><button class="trash" aria-label="trash">${icon("trash", 14)}</button>
        <div class="scroll"><div class="thumbbar"></div></div>
      </div>
    </section>`;
  }

  private composition() {
    return html`<section class="panel comp">
      <div class="tabs">
        <button class="tab on">${icon("close", 6)}<span class="sq tan"></span>${icon("unlock", 11)}<span>合成</span><span class="blue">合成1</span>${icon("menu", 9)}</button>
        <button class="tab layer">图层 （无）</button>
      </div>
      <div class="crumbs"><button class="crumb blue">合成1</button></div>
      <div class="viewer"><div class="stage">
        <span class="handle"></span>
        <svg class="cursor" width="24" height="24" viewBox="0 0 24 24"><circle cx="12" cy="12" r="12" fill="#78690a"/><path d="M12.500 9v7M9 12.500h7" stroke="#f5d9a0"/><path d="M11.500 5.500h2V9h-2zM11.500 16h2v3.500h-2zM5.500 11.500H9v2H5.500zM16 11.500h3.500v2H16z" fill="none" stroke="#d08a4c"/></svg>
        <svg class="center" width="19" height="19" viewBox="0 0 19 19"><path d="M9.500 0v19M0 9.500h19" stroke="#c8c8c8" stroke-width="2.500"/><circle cx="9.500" cy="9.500" r="5.500" fill="#000" stroke="#c8c8c8" stroke-width="2.500"/><circle cx="9.500" cy="9.500" r="4.800" fill="none" stroke="#6b7dd8" stroke-width="1.500"/><path d="M9.500 1v4M9.500 14v4M1 9.500h4M14 9.500h4" stroke="#6b7dd8"/><path d="M9.500 7v5M7 9.500h5" stroke="#c8c8c8"/></svg>
      </div></div>
      <div class="vfoot">
        ${dropdown("zoom", "50%", "zoomdd")}<span class="sep"></span>
        ${dropdown("resolution", "完整", "resdd")}<span class="sep"></span>
        <span class="group"><button class="on" aria-label="fast">${icon("fast", 16)}</button><button aria-label="grid">${icon("checker", 16)}</button><button class="on" aria-label="mask">${icon("mask", 15)}</button><button aria-label="region">${icon("region", 15)}</button><button aria-label="guides">${icon("guides", 16)}</button></span>
        <span class="sep"></span>
        <span class="group"><button aria-label="channels">${icon("rgb", 14)}</button><button aria-label="exposure">${icon("aperture", 13)}</button><button class="exposure blue">+0.0</button></span>
        <span class="sep"></span>
        <span class="group"><button aria-label="snapshot">${icon("camera", 16)}</button><button disabled aria-label="show">${icon("showsnap", 15)}</button></span>
        <span class="sep"></span>
        <button class="frame">00000</button>
      </div>
    </section>`;
  }

  private scripts() {
    const ease = (n: string) => html`<div class="ease">${icon(n, 13)}<input class="slider" type="range" value="0" aria-label=${n} /></div>`;
    return html`<div class="stack">
      <section class="panel motion fit">
        <div class="tabs"><button class="tab">Motion 2 ${icon("menu", 9)}</button><span class="bar"></span></div>
        <div class="frame-box">
          <div class="script">Motion v2</div>
          ${ease("easeL")}${ease("easeB")}${ease("easeR")}
          <div class="actions">
            <div class="action"><button>${icon("plus", 13)}EXCITE</button>${icon("land", 13)}</div>
            <div class="action"><button>${icon("clone", 14)}CLONE</button>${icon("drop", 13)}</div>
          </div>
        </div>
      </section>
      <section class="panel circle grow">
        <div class="tabs"><button class="tab">Circle Align</button><span class="bar"></span></div>
        <div class="frame-box">
          <fieldset><legend>Axis</legend><div class="opts even">
            <label><input type="radio" name="axis" />X</label><label><input type="radio" name="axis" />Y</label><label><input type="radio" name="axis" checked />Z</label></div></fieldset>
          <fieldset><legend>Distance</legend><div class="opts"><input class="slider" type="range" value="0" aria-label="Distance" /><input class="num" value="100" aria-label="Distance value" /></div></fieldset>
          <fieldset><legend>Distance step</legend><div class="opts"><input class="slider near" type="range" value="0" aria-label="Distance step" /><input class="num" value="0" aria-label="Step value" /></div></fieldset>
          <fieldset><legend>Initial Axis</legend><div class="opts"><input class="slider bare" type="range" value="40" aria-label="Initial Axis" /><input class="num wide" value="0" aria-label="Initial axis value" /></div></fieldset>
          <fieldset><legend>Direction</legend><div class="opts"><input type="radio" name="dir" aria-label="Clockwise" checked /><label class="apart"><input type="radio" name="dir" />Count...</label></div></fieldset>
          <fieldset><legend>Distribute</legend><div class="opts"><label><input type="radio" name="dist" checked />Circ...</label><label><input type="radio" name="dist" />A...</label></div>
            <fieldset><legend>Angle interval</legend><div class="opts"><input class="slider short" type="range" value="0" disabled aria-label="Angle interval" /><input class="num wide" value="0" disabled aria-label="Angle value" /></div></fieldset>
          </fieldset>
          <div class="focus"><label><input type="checkbox" />Focus...</label><input type="checkbox" aria-label="option" /></div>
          <div class="cbtns"><button class="apply">Apply</button><button>⚡︎</button><button>?</button></div>
        </div>
      </section>
    </div>`;
  }

  private crow(a: string, av: unknown, b: string, bv: unknown, tall = "") {
    return html`<div class="crow ${tall}">${icon(a, 18)}<button>${av}</button>${icon("down", 9)}${icon(b, 18)}<button>${bv}</button>${icon("down", 9)}</div>`;
  }

  private side() {
    const px = html`<span class="cjk">像素</span>`;
    const v = (t: string) => html`<span class="blue">${t}</span>`;
    return html`<div class="stack side">
      <section class="panel info">
        <div class="tabs"><button class="tab on">信息 ${icon("menu", 9)}</button><button class="tab audio">音频</button></div>
        <div class="readout">
          <div class="chip"></div>
          <div class="chan"><span>R</span><span>:</span><span></span><span>G</span><span>:</span><span></span><span>B</span><span>:</span><span></span><span>A</span><span>:</span><span>0</span></div>
          <div class="plus">${icon("cross", 10)}</div>
          <div class="xy"><span>X :</span><span>184</span><span>Y :</span><span>134</span></div>
        </div>
        <div class="hr"></div>
        <div class="note"><p class="cjk">形状: 形状图层 1</p><p>T: -136.0， L: -296.0， B: -126.0， R: -266.0</p></div>
      </section>
      <section class="panel preview">
        <div class="tabs"><button class="tab on plain">预览 ${icon("menu", 9)}</button></div>
        <div class="transport">${["first", "prev", "play", "next", "last"].map((n) => html`<button aria-label=${n}>${icon(n, 13)}</button>`)}</div>
      </section>
      <section class="panel char grow">
        <div class="tabs"><button class="tab other">效果和预设</button><button class="tab on">字符 ${icon("menu", 9)}</button><span class="bar"></span><button class="end" aria-label="more">${icon("more", 13)}</button></div>
        <div class="fonts">
          <div class="fontdds">${dropdown("font", "新愚公装甲宋A", "fontdd")}${dropdown("style", "-", "fontdd")}</div>
          <div class="paint">
            <div><button aria-label="dropper">${icon("dropper", 18)}</button><div class="bw"></div></div>
            <div class="wells"><svg class="ic" width="44" height="44" viewBox="0 0 44 44">
              <rect x="12.500" y="13.500" width="29" height="29" fill="#fff" stroke="#000"/><rect x="21" y="22" width="12" height="12" fill="#222" stroke="#000"/><path d="M13 42L41 14" stroke="#c8281d" stroke-width="2"/>
              <rect x=".5" y=".5" width="29" height="29" fill="#fff" stroke="#000"/>
              <rect x="0" y="30" width="12" height="12" fill="#222"/><rect x="1" y="31" width="10" height="10" fill="#fff"/><path d="M2 40l8-8" stroke="#c8281d"/>
              <g transform="translate(31 2) scale(.62)" color="#b4b4b4">${icons.swap}</g></svg></div>
          </div>
        </div>
        <div class="hr"></div>
        ${this.crow("size", html`${v("80")}${px}`, "leading", html`${v("105")}${px}`)}
        ${this.crow("kern", html`<span class="cjk dim">度量标准</span>`, "track", v("0"))}
        <div class="hr low"></div>
        <div class="crow">${icon("stroke", 16)}<button>${v("-")}${px}</button>${icon("down", 9)}${dropdown("stroke mode", "", "span")}</div>
        <div class="hr low"></div>
        ${this.crow("vscale", html`${v("100")}<span>%</span>`, "hscale", html`${v("100")}<span>%</span>`, "tall")}
        ${this.crow("baseline", html`${v("0")}${px}`, "tsume", html`${v("0")}<span>%</span>`, "tall")}
        <div class="hr low"></div>
        <div class="styles"><button>T</button><button><i>T</i></button><button>TT</button><button>T<small>T</small></button><button>T<small>¹</small></button><button>T<small>₁</small></button></div>
        <div class="checks cjk"><label><input type="checkbox" />连字</label><label><input type="checkbox" />印地语数字</label></div>
      </section>
    </div>`;
  }

  private align() {
    const row = (r: number) => html`<div class="aligns">${alignGlyphs[r].map((g) => html`<button aria-label="align">${glyph(g, 18)}</button>`)}</div>`;
    return html`<section class="panel align">
      <div class="tabs"><button class="tab tracker">跟踪器</button><button class="tab on">对齐 ${icon("menu", 9)}</button><button class="tab para">段落</button><span class="bar"></span><button class="end" aria-label="more">${icon("more", 13)}</button></div>
      <div class="alignto"><span class="cjk">将图层对齐到:</span>${dropdown("align to", "选区", "aligndd", true)}</div>
      ${row(0)}
      <div class="hr"></div>
      <div class="alabel cjk">分布图层:</div>
      ${row(1)}
    </section>`;
  }

  private timeline() {
    const cols = [66, 31, 22, 166, 124, 18, 120, 117];
    return html`<section class="panel time">
      <div class="ttab">${icon("close", 8)}<span class="sq tan"></span><span>合成1</span>${icon("menu", 9)}</div>
      <div class="tbody">
        <div class="tleft">
          <div class="thead">
            <div class="tc"><p>00000</p><p class="sub">0:00:00:00 (30.00 fps)</p></div>
            <label class="field">${icon("lensDrop", 18)}<input aria-label="filter layers" /></label>
            <div class="tbtns"><button class="wide" aria-label="flow">${icon("flow", 17)}</button><button aria-label="shy">${icon("shy", 15)}</button><button aria-label="blend">${icon("blend", 15)}</button><button aria-label="blur">${icon("blur", 16)}</button><button class="graph" aria-label="graph">${icon("graph", 17)}</button></div>
          </div>
          <table class="layers">
            <colgroup>${cols.map((w) => html`<col style="width:${w}px" />`)}<col /></colgroup>
            <thead><tr>
              <th class="first"><span class="row sw">${["eye", "speaker", "dot", "lock"].map((n) => icon(n, 13))}</span></th>
              <th class="tagged">${icon("tag", 14)}</th><th class="num">#</th><th>源名称</th><th>模式</th>
              <th class="bare">T</th><th class="bare">TrkMat</th><th>父级和链接</th><th></th>
            </tr></thead>
            <tbody><tr>
              <td><div class="row sw"><button class="cell" aria-label="visible">${icon("eye", 13)}</button><span class="cell gap"></span><span class="cell"></span></div></td>
              <td><div class="row mark">${icon("twirl", 11)}<span class="label peri"></span></div></td>
              <td class="num">1</td>
              <td><div class="row source bright">${icon("star", 13)}<span class="picked">形状图层&nbsp; 1</span></div></td>
              <td>${dropdown("mode", "正常", "modedd")}</td>
              <td><span class="row"><span class="cell"></span></span></td><td></td>
              <td><div class="row parent">${icon("spiral", 13)}${dropdown("parent", "无", "modedd")}</div></td><td></td>
            </tr></tbody>
          </table>
        </div>
        <div class="track">
          <div class="nav"><span class="cap"></span><i></i><span class="cap r"></span></div>
          <div class="ruler">${["00000", "00025", "00050", "00075", "00100"].map((t) => html`<div><span>${t}</span></div>`)}</div>
          <div class="area"><span class="cap"></span><i></i><span class="cap r"></span></div>
          <div class="cache"></div>
          <div class="lane"><div class="clip"></div></div>
          <div class="empty"></div>
          <div class="playhead"><svg class="ic" width="13" height="13" viewBox="0 0 13 13"><path d="M0 0h13v6l-6.500 7L0 6z" fill="#2d8ceb"/><path d="M5 6h3M6.500 6v4" stroke="#123"/></svg></div>
        </div>
        <div class="rail">${icon("marker", 13)}${icon("shapes", 14)}</div>
      </div>
      <div class="tfoot">
        <button aria-label="expand">${icon("expand", 12)}</button><button class="on" aria-label="modes">${icon("modes", 13)}</button><button aria-label="in out">${icon("brackets", 12)}</button><button aria-label="render">${icon("snail", 13)}</button>
        <span class="cjk">帧渲染时间</span><span class="cjk teal">0毫秒</span>
        <button class="toggle">切换开关/模式</button>
        <div class="zoomer">${icon("hill", 13)}<input class="slider" type="range" value="0" aria-label="timeline zoom" />${icon("hills", 17)}</div>
      </div>
    </section>`;
  }

  render() {
    const menus = ["文件(F)", "编辑(E)", "合成(C)", "图层(L)", "效果(T)", "动画(A)", "视图(V)", "窗口", "帮助(H)"];
    return html`
      <nav class="menubar">${menus.map((m) => html`<a href="#">${m}</a>`)}</nav>
      ${this.toolbar()}
      <main class="work">
        ${this.project()}${this.composition()}${this.scripts()}${this.side()}
        ${this.timeline()}${this.align()}
      </main>`;
  }
}
